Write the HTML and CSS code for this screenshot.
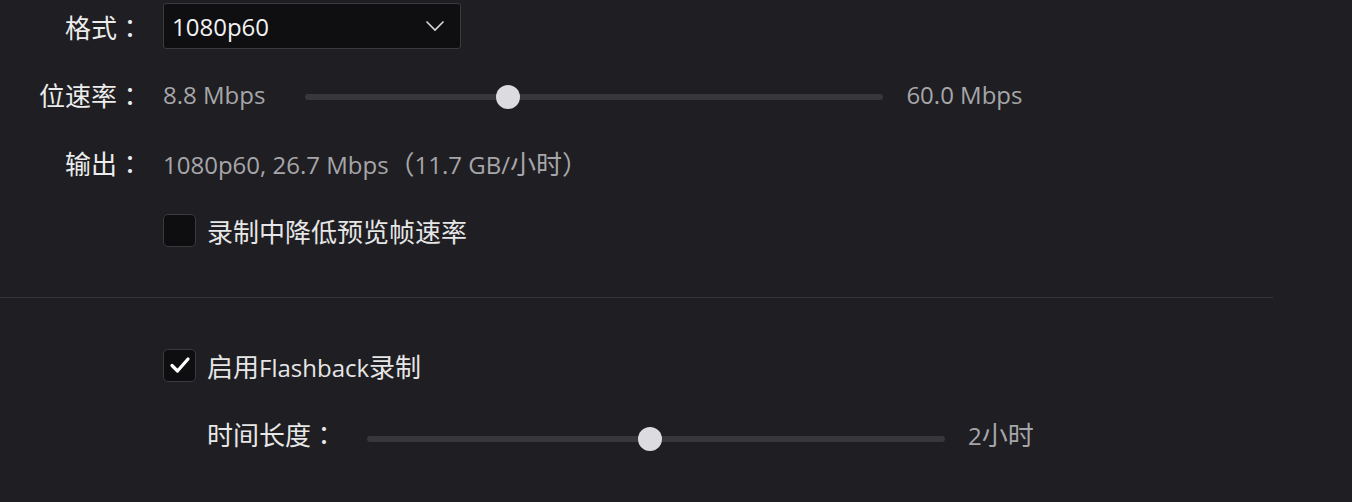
FILE: index.html
```html
<!DOCTYPE html>
<html lang="zh-CN">
<head>
<meta charset="utf-8">
<title>录制设置</title>
<link rel="stylesheet" href="styles.css">
</head>
<body>
<div class="panel">
  <div class="row">
    <div class="label">格式<span class="colon" lang="zh-TW">：</span></div>
    <div class="select">
      <span class="select-value">1080p60</span>
      <svg class="chevron" width="20" height="12" viewBox="0 0 20 12"><path d="M1.5 1.5 L10 10 L18.5 1.5" fill="none" stroke="#d8d8d8" stroke-width="1.6"/></svg>
    </div>
  </div>
  <div class="row">
    <div class="label">位速率<span class="colon" lang="zh-TW">：</span></div>
    <span class="value">8.8 Mbps</span>
    <div class="slider slider-bitrate">
      <div class="track"></div>
      <div class="thumb" style="left: 35.1%"></div>
    </div>
    <span class="value">60.0 Mbps</span>
  </div>
  <div class="row">
    <div class="label">输出<span class="colon" lang="zh-TW">：</span></div>
    <span class="value">1080p60, 26.7 Mbps<span class="cjk">（</span>11.7 GB/<span class="cjk">小时）</span></span>
  </div>
  <div class="row">
    <div class="label"></div>
    <div class="checkbox"></div>
    <span class="check-label cjk">录制中降低预览帧速率</span>
  </div>
  <div class="divider"></div>
  <div class="row">
    <div class="label"></div>
    <div class="checkbox checked">
      <svg width="22" height="18" viewBox="0 0 22 18"><path d="M3 9.5 L8.5 15 L19 3" fill="none" stroke="#ffffff" stroke-width="3.2" stroke-linecap="round" stroke-linejoin="round"/></svg>
    </div>
    <span class="check-label"><span class="cjk">启用</span>Flashback<span class="cjk">录制</span></span>
  </div>
  <div class="row sub">
    <div class="label"></div>
    <span class="sub-label">时间长度<span class="colon" lang="zh-TW">：</span></span>
    <div class="slider slider-duration">
      <div class="track"></div>
      <div class="thumb" style="left: 49%"></div>
    </div>
    <span class="value">2<span class="cjk">小时</span></span>
  </div>
</div>
</body>
</html>
```

FILE: styles.css
```css
html, body {
  margin: 0;
  padding: 0;
  background: #1f1e22;
  height: 100%;
}
body {
  font-family: "Open Sans", "Noto Sans CJK SC", sans-serif;
  font-size: 24px;
  color: #e6e6e6;
  overflow: hidden;
}
.panel {
  padding-top: 3px;
  display: flex;
  flex-direction: column;
  gap: 22px;
}
.row {
  height: 46px;
  display: flex;
  align-items: center;
}
.cjk {
  font-family: "Noto Sans CJK SC", sans-serif;
  font-size: 26px;
}
.colon {
  font-family: "Noto Sans CJK TC", sans-serif;
}
.label {
  width: 143px;
  flex: none;
  text-align: right;
  margin-right: 20px;
  color: #ececec;
  font-family: "Noto Sans CJK SC", sans-serif;
  font-size: 26px;
  white-space: nowrap;
}
.select {
  width: 298px;
  height: 46px;
  box-sizing: border-box;
  border: 1px solid #3b3a3f;
  border-radius: 3px;
  background: #0f0e11;
  display: flex;
  align-items: center;
  justify-content: space-between;
  padding: 0 15px 0 8px;
}
.select-value {
  color: #f2f2f2;
  font-size: 24px;
}
.value {
  color: #a6a6aa;
  white-space: nowrap;
}
.slider {
  position: relative;
  width: 578px;
  height: 24px;
  flex: none;
}
.slider-bitrate {
  margin: 6px 23px 0 40px;
}
.slider-duration {
  margin: 12px 23px 0 30px;
}
.track {
  position: absolute;
  left: 0;
  right: 0;
  top: 9px;
  height: 6px;
  border-radius: 3px;
  background: #38373c;
}
.thumb {
  position: absolute;
  top: 0;
  width: 24px;
  height: 24px;
  margin-left: -12px;
  border-radius: 50%;
  background: #dcdbe0;
}
.checkbox {
  width: 33px;
  height: 33px;
  box-sizing: border-box;
  border: 1px solid #3a393e;
  border-radius: 5px;
  background: #0e0d10;
  display: flex;
  align-items: center;
  justify-content: center;
  margin-right: 11px;
  flex: none;
}
.check-label {
  color: #e6e6e6;
}
.sub-label {
  margin-left: 44px;
  color: #e8e8e8;
  font-family: "Noto Sans CJK SC", sans-serif;
  font-size: 26px;
}
.divider {
  width: 1273px;
  height: 1px;
  background: #36353a;
  margin: 22px 0 22px;
}
```
